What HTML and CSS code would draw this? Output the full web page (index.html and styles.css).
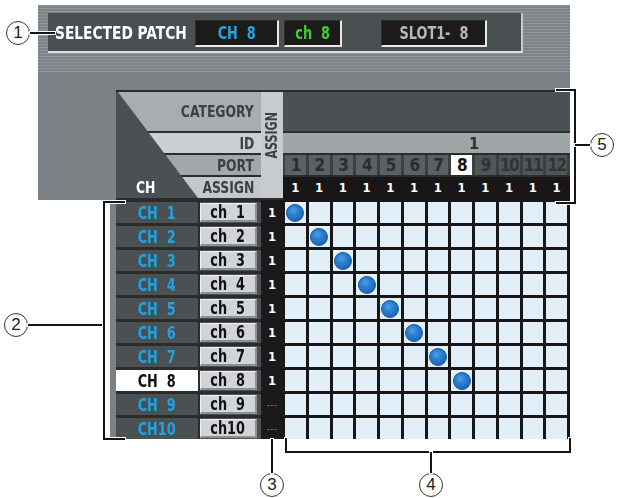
FILE: index.html
```html
<!DOCTYPE html>
<html>
<head>
<meta charset="utf-8">
<link rel="stylesheet" href="styles.css">
</head>
<body>
<div class="screen">
  <div class="top">
    <div class="patch">
      <span class="plabel"><span class="t tl">SELECTED PATCH</span></span>
      <span class="box cyan b1"><span class="t">CH&nbsp; 8</span></span>
      <span class="box green b2"><span class="t">ch&nbsp; 8</span></span>
      <span class="box grey b3"><span class="t">SLOT1-&nbsp; 8</span></span>
    </div>
  </div>
  <div class="main">
    <div class="table">
      <div class="lhead">
        <div class="band cat"><span class="t tr">CATEGORY</span></div>
        <div class="band idb"><span class="t tr">ID</span></div>
        <div class="band portb"><span class="t tr">PORT</span></div>
        <div class="band asb"><span class="t chh">CH</span><span class="t tr">ASSIGN</span></div>
      </div>
      <div class="vassign"><span>ASSIGN</span></div>
      <div class="rcat"></div>
      <div class="rid"><span>1</span></div>
      <div class="rport">
        <span>1</span><span>2</span><span>3</span><span>4</span><span>5</span><span>6</span><span>7</span><span class="sel">8</span><span class="dk">9</span><span class="dk">10</span><span class="dk">11</span><span class="dk">12</span>
      </div>
      <div class="rblack">
        <div class="arow">
          <span>1</span><span>1</span><span>1</span><span>1</span><span>1</span><span>1</span><span>1</span><span>1</span><span>1</span><span>1</span><span>1</span><span>1</span>
        </div>
        <div class="matrix">
          <i><b class="dot"></b></i><i></i><i></i><i></i><i></i><i></i><i></i><i></i><i></i><i></i><i></i><i></i>
          <i></i><i><b class="dot"></b></i><i></i><i></i><i></i><i></i><i></i><i></i><i></i><i></i><i></i><i></i>
          <i></i><i></i><i><b class="dot"></b></i><i></i><i></i><i></i><i></i><i></i><i></i><i></i><i></i><i></i>
          <i></i><i></i><i></i><i><b class="dot"></b></i><i></i><i></i><i></i><i></i><i></i><i></i><i></i><i></i>
          <i></i><i></i><i></i><i></i><i><b class="dot"></b></i><i></i><i></i><i></i><i></i><i></i><i></i><i></i>
          <i></i><i></i><i></i><i></i><i></i><i><b class="dot"></b></i><i></i><i></i><i></i><i></i><i></i><i></i>
          <i></i><i></i><i></i><i></i><i></i><i></i><i><b class="dot"></b></i><i></i><i></i><i></i><i></i><i></i>
          <i></i><i></i><i></i><i></i><i></i><i></i><i></i><i><b class="dot"></b></i><i></i><i></i><i></i><i></i>
          <i></i><i></i><i></i><i></i><i></i><i></i><i></i><i></i><i></i><i></i><i></i><i></i>
          <i></i><i></i><i></i><i></i><i></i><i></i><i></i><i></i><i></i><i></i><i></i><i></i>
        </div>
      </div>
      <div class="rows">
        <div class="row"><span class="lab"><span class="t">CH&nbsp; 1</span></span><span class="btn"><span class="t">ch&nbsp; 1</span></span></div>
        <div class="row"><span class="lab"><span class="t">CH&nbsp; 2</span></span><span class="btn"><span class="t">ch&nbsp; 2</span></span></div>
        <div class="row"><span class="lab"><span class="t">CH&nbsp; 3</span></span><span class="btn"><span class="t">ch&nbsp; 3</span></span></div>
        <div class="row"><span class="lab"><span class="t">CH&nbsp; 4</span></span><span class="btn"><span class="t">ch&nbsp; 4</span></span></div>
        <div class="row"><span class="lab"><span class="t">CH&nbsp; 5</span></span><span class="btn"><span class="t">ch&nbsp; 5</span></span></div>
        <div class="row"><span class="lab"><span class="t">CH&nbsp; 6</span></span><span class="btn"><span class="t">ch&nbsp; 6</span></span></div>
        <div class="row"><span class="lab"><span class="t">CH&nbsp; 7</span></span><span class="btn"><span class="t">ch&nbsp; 7</span></span></div>
        <div class="row"><span class="lab sel"><span class="t">CH&nbsp; 8</span></span><span class="btn"><span class="t">ch&nbsp; 8</span></span></div>
        <div class="row"><span class="lab"><span class="t">CH&nbsp; 9</span></span><span class="btn"><span class="t">ch&nbsp; 9</span></span></div>
        <div class="row"><span class="lab"><span class="t">CH10</span></span><span class="btn"><span class="t">ch10</span></span></div>
      </div>
      <div class="anum">
        <span>1</span><span>1</span><span>1</span><span>1</span><span>1</span><span>1</span><span>1</span><span>1</span><span class="dash">---</span><span class="dash">---</span>
      </div>
    </div>
  </div>
</div>

<div class="co c1">1</div>
<div class="ln l1"></div>

<div class="co c2">2</div>
<div class="ln l2"></div>
<div class="br b2br"></div>

<div class="co c3">3</div>
<div class="ln l3"></div>

<div class="co c4">4</div>
<div class="br b4br"></div>
<div class="ln l4"></div>

<div class="co c5">5</div>
<div class="br b5br"></div>
<div class="ln l5"></div>
</body>
</html>
```

FILE: styles.css
```css
html, body {
  margin: 0;
  padding: 0;
}
body {
  width: 617px;
  height: 498px;
  background: #ffffff;
  position: relative;
  overflow: hidden;
  font-family: "DejaVu Sans Condensed", "DejaVu Sans", sans-serif;
  font-weight: bold;
}

.t {
  display: inline-block;
  white-space: nowrap;
  transform: scaleX(0.84);
  transform-origin: center;
}
.t.tl { transform-origin: left center; }
.t.tr { transform-origin: right center; }

.screen {
  margin: 5px 0 0 38px;
  width: 532px;
}

.top {
  height: 67px;
  box-sizing: border-box;
  padding: 8px 0 0 10px;
  background: repeating-linear-gradient(to bottom, #91969a 0, #91969a 1px, #7e8387 1px, #7e8387 3px);
}

.patch {
  width: 475px;
  height: 40px;
  box-sizing: border-box;
  background: #4a4f51;
  border-right: 2px solid #c9cbcc;
  border-bottom: 2px solid #dcdedf;
  display: flex;
  align-items: flex-start;
  padding-left: 7px;
}

.plabel {
  width: 140px;
  color: #ffffff;
  font-size: 17px;
  line-height: 20px;
  margin-top: 10px;
}
.plabel .t { transform: scaleX(0.9); }

.box {
  height: 27px;
  margin-top: 7px;
  box-sizing: border-box;
  background: #1d1a1a;
  border-top: 1px solid #2e2e2e;
  border-left: 1px solid #2e2e2e;
  border-right: 2px solid #e8e8e8;
  border-bottom: 2px solid #e8e8e8;
  display: flex;
  align-items: center;
  justify-content: center;
  font-size: 17px;
}
.b1 { width: 84px; }
.b2 { width: 58px; margin-left: 5px; }
.b3 { width: 106px; margin-left: 39px; }
.cyan { color: #22a4e6; }
.green { color: #3ccc3c; }
.grey { color: #b5b9bc; }

.main {
  background:
    linear-gradient(#ffffff, #ffffff) 0 128px / 72px 100% no-repeat,
    #7c8185;
  padding: 18px 0 0 78px;
}

.table {
  width: 454px;
  background: #2a2d2e;
  padding-top: 2px;
  display: grid;
  grid-template-columns: 145px 22px 287px;
  grid-template-rows: 39px 20px 20px 21px auto;
  row-gap: 2px;
}

/* left header */
.lhead {
  grid-column: 1;
  grid-row: 1 / 5;
  display: flex;
  flex-direction: column;
  gap: 2px;
  position: relative;
}
.lhead::after {
  content: "";
  position: absolute;
  left: 0;
  top: 0;
  right: 0;
  bottom: 0;
  background: #4b5052;
  clip-path: polygon(0 0, 2px 0, 82px 100%, 0 100%);
}
.band {
  display: flex;
  align-items: center;
  justify-content: flex-end;
  padding-right: 7px;
  color: #3c4143;
  font-size: 16px;
}
.band .t { transform: scaleX(0.86); }
.cat { height: 39px; background: #a8adb0; }
.idb { height: 20px; background: #cbcfd1; }
.portb { height: 20px; background: #a2a7aa; }
.asb { height: 21px; background: #c4c8ca; justify-content: space-between; padding-left: 20px; }
.band .chh {
  color: #ffffff;
  position: relative;
  z-index: 1;
  transform-origin: left center;
}

.vassign {
  grid-column: 2;
  grid-row: 1 / 5;
  background: #c7cbcd;
  display: flex;
  justify-content: center;
  align-items: flex-start;
  padding-top: 15px;
}
.vassign span {
  writing-mode: vertical-rl;
  transform: rotate(180deg) scaleY(0.82);
  color: #3c4143;
  font-size: 15px;
}

.rcat {
  grid-column: 3;
  grid-row: 1;
  background: #4b5052;
}
.rid {
  grid-column: 3;
  grid-row: 2;
  background: #9fa4a7;
  color: #2c3133;
  font-size: 16px;
  display: flex;
  align-items: center;
  padding-left: 186px;
}
.rport {
  grid-column: 3;
  grid-row: 3;
  background: #3c4042;
  display: grid;
  grid-template-columns: repeat(12, 1fr);
  column-gap: 3px;
  padding: 0 3px 0 2px;
}
.rport span {
  background: #5b6062;
  color: #2a2e30;
  display: flex;
  align-items: center;
  justify-content: center;
  font-size: 17px;
  letter-spacing: -1.5px;
}
.rport span.sel {
  background: #ffffff;
  color: #111111;
}
.rport span.dk {
  background: #505557;
  color: #303436;
}

.rblack {
  grid-column: 3;
  grid-row: 4 / 6;
  background: #181616;
}
.arow {
  height: 21px;
  display: grid;
  grid-template-columns: repeat(12, 1fr);
  column-gap: 3px;
  padding: 0 3px 0 2px;
}
.arow span {
  color: #ffffff;
  font-size: 13px;
  display: flex;
  align-items: center;
  justify-content: center;
}
.matrix {
  display: grid;
  grid-template-columns: repeat(12, 1fr);
  grid-template-rows: repeat(10, 21px);
  gap: 3px;
  padding: 4px 3px 0 2px;
}
.matrix i {
  background: #e3eff8;
  display: flex;
  align-items: center;
  justify-content: center;
}
.dot {
  width: 18px;
  height: 18px;
  border-radius: 50%;
  box-sizing: border-box;
  border: 1px solid #17569a;
  background: radial-gradient(circle at 40% 35%, #4f9fe6 0, #2a80d0 35%, #1d6ab9 70%, #155296 100%);
}

.rows {
  grid-column: 1;
  grid-row: 5;
  display: flex;
  flex-direction: column;
  gap: 3px;
  padding-top: 2px;
  background: #2a2d2e;
}
.row {
  height: 21px;
  display: flex;
  align-items: center;
  background: #4b5052;
}
.lab {
  width: 82px;
  height: 21px;
  display: flex;
  align-items: center;
  justify-content: center;
  color: #20a2e8;
  font-size: 17px;
  background: #4b5052;
  border-right: 2px solid #2a2d2e;
}
.lab.sel {
  background: #ffffff;
  color: #111111;
}
.btn {
  width: 57px;
  height: 19px;
  box-sizing: border-box;
  background: #d2d5d7;
  border-top: 1px solid #f2f2f2;
  border-left: 1px solid #eeeeee;
  border-right: 2px solid #8c9092;
  border-bottom: 2px solid #8c9092;
  display: flex;
  align-items: center;
  justify-content: center;
  color: #111111;
  font-size: 17px;
}

.anum {
  grid-column: 2;
  grid-row: 5;
  background: #1b1919;
  display: flex;
  flex-direction: column;
  gap: 3px;
  padding-top: 2px;
}
.anum span {
  height: 21px;
  display: flex;
  align-items: center;
  justify-content: center;
  color: #ffffff;
  font-size: 13px;
}
.anum span.dash {
  color: #8a8a8a;
  font-size: 9px;
  font-weight: normal;
  letter-spacing: 0.5px;
}

/* callouts */
.co {
  position: absolute;
  width: 24px;
  height: 24px;
  box-sizing: border-box;
  border: 1px solid #333333;
  border-radius: 50%;
  background: #ffffff;
  display: flex;
  align-items: center;
  justify-content: center;
  font-family: "Liberation Sans", sans-serif;
  font-weight: normal;
  font-size: 17px;
  color: #222222;
}
.c1 { left: 6px; top: 21px; }
.c2 { left: 4px; top: 313px; }
.c3 { left: 260px; top: 473px; }
.c4 { left: 419px; top: 473px; }
.c5 { left: 590px; top: 133px; }

.ln {
  position: absolute;
  background: #151515;
  box-shadow: 0 0 0 1px #ffffff;
}
.l1 { left: 30px; top: 32px; width: 25px; height: 2px; }
.l2 { left: 28px; top: 324px; width: 76px; height: 2px; }
.l3 { left: 271px; top: 439px; width: 2px; height: 34px; }
.l4 { left: 430px; top: 452px; width: 2px; height: 21px; }
.l5 { left: 575px; top: 144px; width: 15px; height: 2px; }

.br {
  position: absolute;
  box-sizing: border-box;
  border: 0 solid #151515;
  filter: drop-shadow(1px 0 0 #fff) drop-shadow(-1px 0 0 #fff) drop-shadow(0 1px 0 #fff) drop-shadow(0 -1px 0 #fff);
}
.b2br { left: 103px; top: 201px; width: 22px; height: 239px; border-width: 2px 0 2px 2px; }
.b4br { left: 285px; top: 438px; width: 286px; height: 15px; border-width: 0 2px 2px 2px; }
.b5br { left: 556px; top: 89px; width: 20px; height: 115px; border-width: 2px 2px 2px 0; }
```
